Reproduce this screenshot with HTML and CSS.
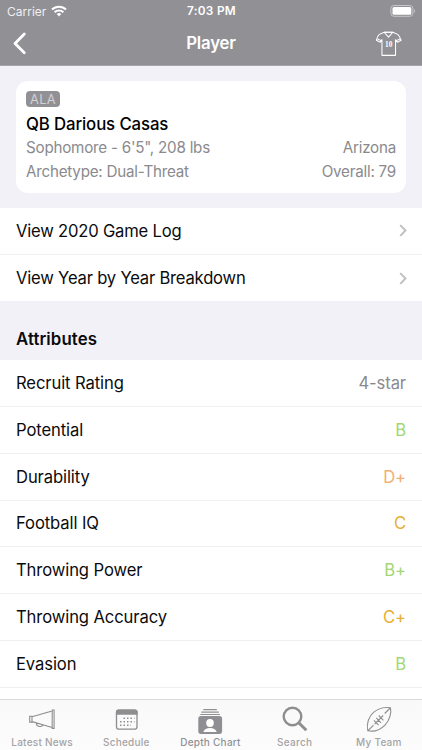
FILE: index.html
```
<!DOCTYPE html>
<html lang="en">
<head>
<meta charset="utf-8">
<title>Player</title>
<link rel="stylesheet" href="styles.css">
</head>
<body>
<div class="app">
  <header class="top">
    <div class="status">
      <div class="carrier"><span>Carrier</span>
        <svg width="16" height="12" viewBox="0 0 16 12" fill="none" stroke="#fff" stroke-width="2.1"><path d="M1 4.6a10 10 0 0 1 14 0M3.6 7.3a6.3 6.3 0 0 1 8.8 0"/><path d="M8 11.4 5.7 9.1a3.3 3.3 0 0 1 4.6 0z" fill="#fff" stroke="none"/></svg>
      </div>
      <span class="time">7:03 PM</span>
      <svg class="battery" width="26" height="12" viewBox="0 0 26 12"><rect x=".9" y=".5" width="22" height="10.8" rx="3" fill="none" stroke="#c7c6ca"/><rect x="2.5" y="2" width="18.8" height="7.8" rx="1.5" fill="#fff"/><path d="M24.1 4v4q1-.6 1-2t-1-2z" fill="#c7c6ca"/></svg>
    </div>
    <nav class="nav">
      <svg class="back" width="14" height="23" viewBox="0 0 14 23" fill="none" stroke="#fff" stroke-width="2.8" stroke-linecap="round" stroke-linejoin="round"><path d="M11.3 2 2 11.5l9.3 9.3"/></svg>
      <h1>Player</h1>
      <svg class="jersey" width="27" height="26" viewBox="0 0 28 27" fill="none" stroke="#fff" stroke-width="1.1" stroke-linejoin="round"><path d="M9.5 1.300 4.500 3.500Q2.500 5 1.400 9.600l4 2.100 1.800-2.700V25.300h14.100V9l1.800 2.700 4-2.100Q25.500 5 23.500 3.500l-5-2.200z"/><path d="m9.500 1.300 4.500 5 4.500-5M9.500 1.300h9M2.300 8l4 2M26.200 8l-4 2"/><text x="14.200" y="16.900" text-anchor="middle">10</text></svg>
    </nav>
  </header>
  <main>
    <section class="card">
      <span class="badge">ALA</span>
      <h2>QB Darious Casas</h2>
      <div class="detail"><span class="bio">Sophomore - 6'5", 208 lbs</span><span class="state">Arizona</span></div>
      <div class="detail"><span class="arch">Archetype: Dual-Threat</span><span class="overall">Overall: 79</span></div>
    </section>
    <ul class="list links">
      <li><span>View 2020 Game Log</span><svg class="chev" width="8" height="13" viewBox="0 0 8 13"><path d="m1.2 1.2 5.3 5.3-5.3 5.3"/></svg></li>
      <li><span>View Year by Year Breakdown</span><svg class="chev" width="8" height="13" viewBox="0 0 8 13"><path d="m1.2 1.2 5.3 5.3-5.3 5.3"/></svg></li>
    </ul>
    <h3>Attributes</h3>
    <ul class="list attributes">
      <li><span>Recruit Rating</span><span class="gray">4-star</span></li>
      <li><span>Potential</span><span class="green">B</span></li>
      <li><span>Durability</span><span class="orange">D+</span></li>
      <li><span>Football IQ</span><span class="gold">C</span></li>
      <li><span>Throwing Power</span><span class="green">B+</span></li>
      <li><span>Throwing Accuracy</span><span class="gold">C+</span></li>
      <li><span>Evasion</span><span class="green">B</span></li>
    </ul>
  </main>
  <footer class="tabs">
    <div class="tab"><svg width="28" height="28" viewBox="0 0 28 28" fill="none" stroke="#8e8e90" stroke-width="1.1"><path d="M4 10.800 24.200 4.900v16.600L4 15.600zM24.200 4h1.900v18.400h-1.900zM1.700 10.300H4v5.800H1.700zM8.300 17c0 4 6 4.600 6.500 1.800"/></svg><span>Latest News</span></div>
    <div class="tab"><svg width="28" height="28" viewBox="0 0 28 28"><rect x="4.500" y="4.200" width="20.500" height="19" rx="2.500" fill="none" stroke="#8e8e90" stroke-width="1.300"/><path d="M3.900 8.700V6q0-2.500 2.500-2.500h16.700q2.500 0 2.500 2.500v2.700z" fill="#8e8e90"/><path d="M11.500 12.200h11M8 15.700h14.500M8 19.200h11" stroke="#8e8e90" stroke-width="1.500" stroke-dasharray="1.500 2"/></svg><span>Schedule</span></div>
    <div class="tab active"><svg width="28" height="28" viewBox="0 0 28 28"><path d="M7.300 3.700h13.500M5.300 6.100h17.500M4.300 8.500h19.500" stroke="#8e8e93" stroke-width="1.200"/><rect x="2.300" y="10" width="23.800" height="18" rx="2.700" fill="#8e8e93"/><ellipse cx="14" cy="17" rx="3.800" ry="4" fill="#fff"/><path d="M7.300 26c.8-2.800 3.500-4 6.700-4s5.900 1.200 6.700 4z" fill="#fff"/></svg><span>Depth Chart</span></div>
    <div class="tab"><svg width="28" height="28" viewBox="0 0 28 28" fill="none" stroke="#8e8e90"><circle cx="11.500" cy="10.500" r="8.800" stroke-width="2.400"/><path d="m18 17 7.300 7.300" stroke-width="3"/></svg><span>Search</span></div>
    <div class="tab"><svg width="28" height="28" viewBox="0 0 28 28" fill="none" stroke="#8e8e90" stroke-width="1.100"><path d="M2.800 24.700C1.100 17.600 3.900 10.100 8.800 6.100c5-4.200 12-5.300 16.700-4.300 1 4.800-.5 12-5.300 17-4.900 5-11.400 7.300-17.400 5.900zM3 24.600l5.600-5.500M25.300 2l-5.600 5.500M9.600 18.100l8.600-8.600M8.900 14.300l4.700 4.900M11.300 11.900l4.700 4.900M13.700 9.500l4.700 4.900"/></svg><span>My Team</span></div>
  </footer>
</div>
</body>
</html>
```
FILE: styles.css
```
* { box-sizing: border-box; }
body { margin: 0; font-family: Inter, "Liberation Sans", sans-serif; color: #0b0b0d; }
h1, h2, h3, ul { margin: 0; padding: 0; }
svg { display: block; flex: none; }
.app { width: 422px; height: 750px; display: flex; flex-direction: column; overflow: hidden; background: #f2f1f7; }
.top { height: 66px; flex: none; background: #919095; color: #fff; border-bottom: 1px solid #a6a5aa; }
.status { height: 22px; display: grid; grid-template-columns: 1fr auto 1fr; align-items: center; padding: 0 6px 0 7px; font-size: 12px; }
.carrier { display: flex; align-items: center; gap: 5px; color: #efeff0; letter-spacing: 0; }
.carrier svg { margin-top: -1px; }
.time { font-weight: 600; font-size: 11.8px; letter-spacing: .3px; }
.battery { justify-self: end; margin-top: -1px; }
.nav { height: 43px; display: grid; grid-template-columns: 1fr auto 1fr; align-items: center; padding: 0 20px 0 13px; }
.nav h1 { margin-top: -1px; font-size: 16.8px; font-weight: 600; line-height: 22px; letter-spacing: -.2px; padding-left: 7px; }
.jersey { justify-self: end; }
.jersey text { font: 700 7.6px "Liberation Serif", serif; fill: #fff; stroke: none; }
main { flex: 1; min-height: 0; overflow: hidden; background: linear-gradient(#f2f1f7 400px, #fff 400px); }
.card { height: 112px; margin: 15px 16px; padding: 10px; background: #fff; border-radius: 12px; color: #8a8a8e; font-size: 15.2px; }
.badge { display: flex; align-items: center; justify-content: center; width: 34px; height: 16px; border-radius: 4px; background: #919095; color: #d2d1d5; font-size: 12.8px; letter-spacing: .4px; }
.card h2 { height: 26px; margin-top: 3px; font-size: 16.8px; line-height: 29px; font-weight: 500; color: #000; letter-spacing: -.12px; }
.detail { display: flex; justify-content: space-between; line-height: 24px; letter-spacing: -.23px; }
.list { list-style: none; background: #fff; }
.list li { height: 46.85px; padding: 0 16px; display: flex; align-items: center; justify-content: space-between; font-size: 16.6px; letter-spacing: -.2px; border-bottom: 1px solid #f0f0f2; }
.attributes li { letter-spacing: -.1px; }
.links li { height: 46.5px; }
.links li:last-child { border: 0; padding-top: 1px; }
.list .chev { margin-right: -1px; fill: none; stroke: #bfbfc3; stroke-width: 1.9; }
h3 { height: 59px; padding: 27px 16px 0; font-size: 16.8px; line-height: 22px; font-weight: 600; letter-spacing: .1px; }
.gray { color: #8a8a8e; }
.green { color: #a2d773; }
.orange { color: #f4ad70; }
.gold { color: #e5b02f; }
.tabs { height: 51px; flex: none; display: grid; grid-template-columns: repeat(5, 84.2px); border-top: 1px solid #d9d9db; background: linear-gradient(#f9f9f9, #fcfcfc); }
.tab { display: flex; flex-direction: column; align-items: center; padding-top: 6px; font-size: 10px; line-height: 14px; font-weight: 500; letter-spacing: .25px; color: #a4a4a6; }
.tab span { margin-top: 1px; white-space: nowrap; }
.tab.active { color: #919196; }
```
